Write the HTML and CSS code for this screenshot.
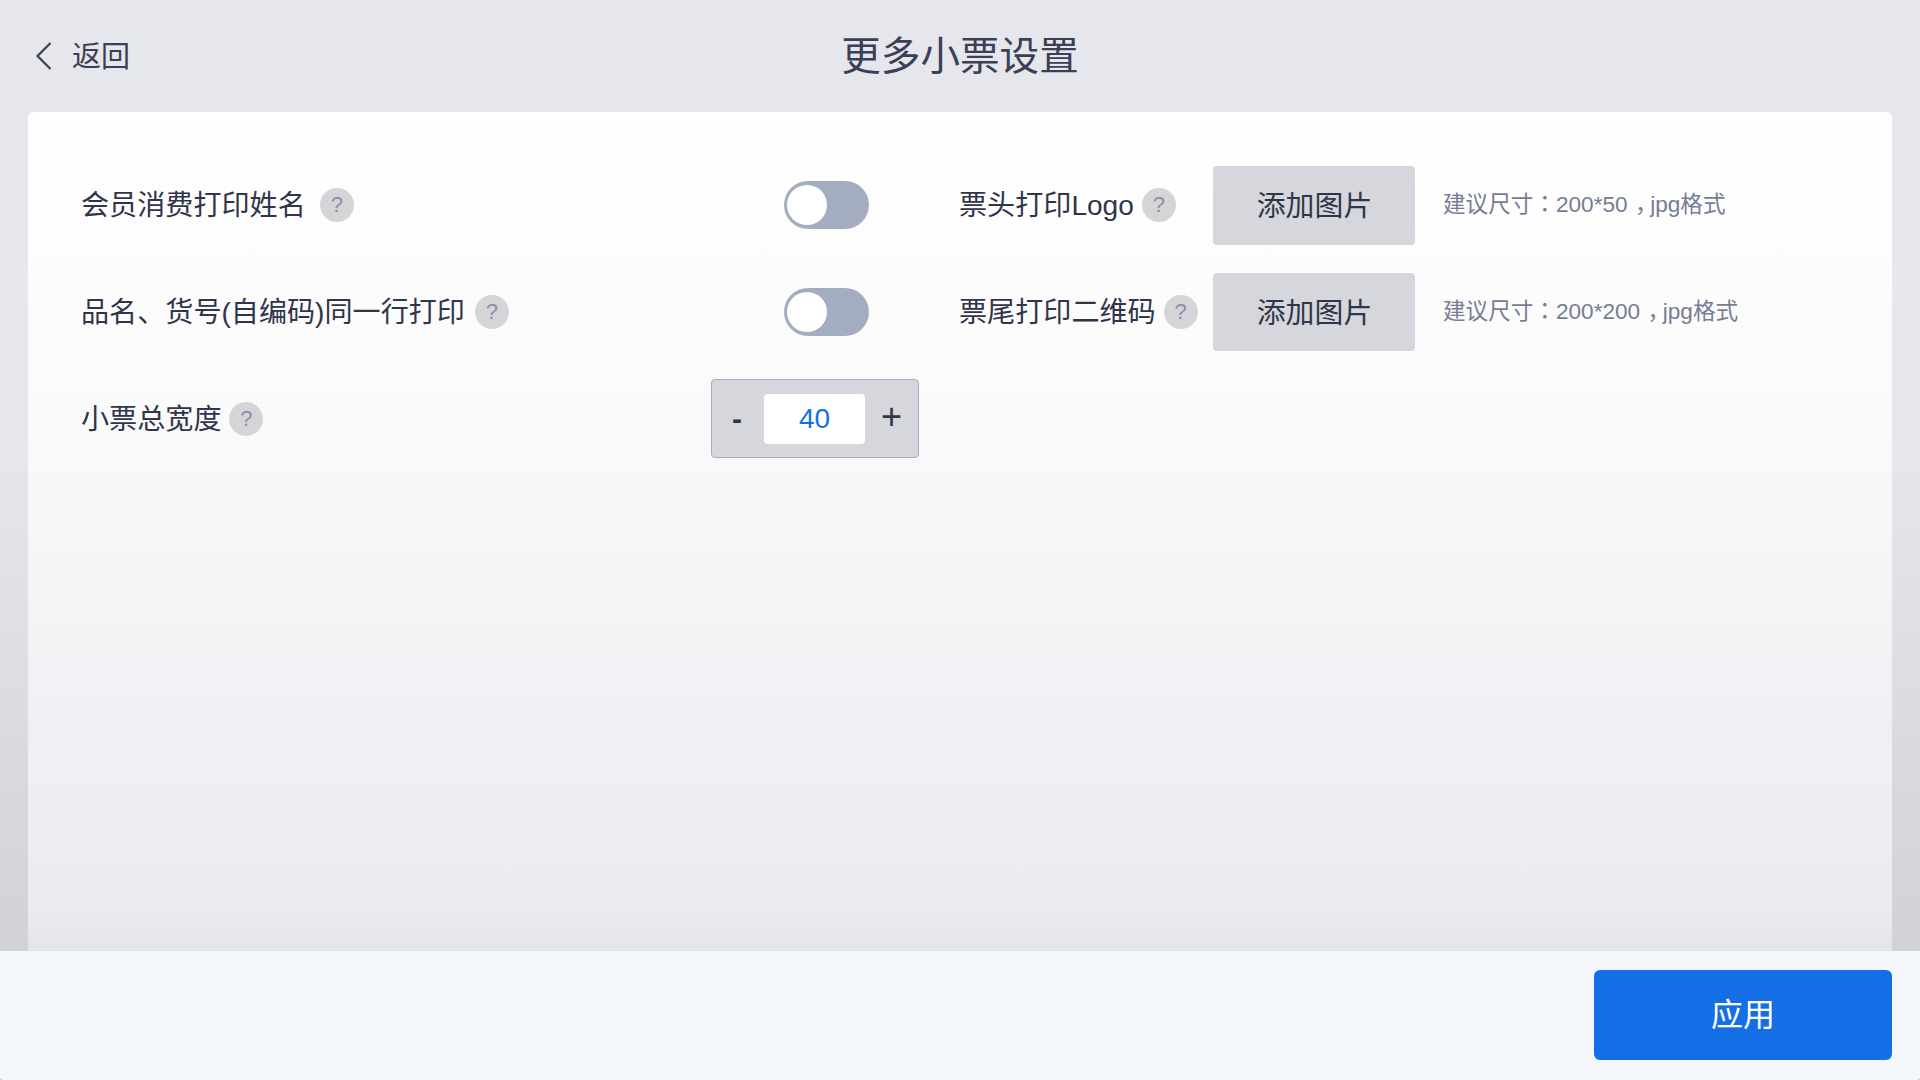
FILE: index.html
```html
<!DOCTYPE html>
<html lang="zh-CN">
<head>
<meta charset="utf-8">
<title>更多小票设置</title>
<link rel="stylesheet" href="styles.css">
</head>
<body>
<div class="app">
  <header class="header">
    <div class="back">
      <svg class="back-icon" width="16" height="28" viewBox="0 0 16 28"><polyline points="14.5,1 1.5,14 14.5,27" fill="none" stroke="#3b4054" stroke-width="2.2"/></svg>
      <span class="back-text">返回</span>
    </div>
    <h1 class="title">更多小票设置</h1>
    <div></div>
  </header>
  <main class="card">
    <div class="grid">
      <div class="row">
        <div class="label-group"><span class="label">会员消费打印姓名</span><span class="help help-a">?</span></div>
        <div class="toggle"><span class="knob"></span></div>
      </div>
      <div class="row-right">
        <div class="label-group label-right"><span class="label">票头打印Logo</span><span class="help help-d">?</span></div>
        <button class="add-btn">添加图片</button>
        <span class="hint">建议尺寸<span class="punct" lang="zh-TW">：</span>200*50<span class="comma">，</span>jpg格式</span>
      </div>
      <div class="row">
        <div class="label-group"><span class="label">品名、货号(自编码)同一行打印</span><span class="help help-b">?</span></div>
        <div class="toggle"><span class="knob"></span></div>
      </div>
      <div class="row-right">
        <div class="label-group label-right"><span class="label">票尾打印二维码</span><span class="help help-d">?</span></div>
        <button class="add-btn">添加图片</button>
        <span class="hint">建议尺寸<span class="punct" lang="zh-TW">：</span>200*200<span class="comma">，</span>jpg格式</span>
      </div>
      <div class="row">
        <div class="label-group"><span class="label">小票总宽度</span><span class="help help-c">?</span></div>
        <div class="stepper">
          <span class="step step-minus">-</span>
          <span class="step-value">40</span>
          <span class="step step-plus">+</span>
        </div>
      </div>
    </div>
  </main>
  <footer class="footer">
    <button class="apply">应用</button>
  </footer>
</div>
</body>
</html>
```
FILE: styles.css
```css
* { box-sizing: border-box; }
html, body { margin: 0; height: 100%; }
body {
  font-family: "Liberation Sans", "Noto Sans CJK SC", sans-serif;
  color: #30354a;
  background: #e6e7ec;
}
.app {
  height: 1080px;
  display: flex;
  flex-direction: column;
  background: linear-gradient(to bottom, #e6e7ec 0, #e6e7ec 450px, #d1d2d6 951px);
}
.header {
  height: 112px;
  flex: none;
  display: grid;
  grid-template-columns: 1fr auto 1fr;
  align-items: center;
  padding: 0 36px;
}
.back {
  display: flex;
  align-items: center;
  gap: 20px;
  font-size: 29px;
  color: #3b4054;
}
.back-text { padding-bottom: 5px; }
.title {
  margin: 0;
  padding-bottom: 7px;
  font-size: 39.6px;
  font-weight: 400;
  color: #3b4054;
}
.card {
  flex: 1;
  margin: 0 28px;
  padding: 54px 53px 0;
  border-radius: 6px 6px 0 0;
  background: linear-gradient(to bottom, #fff 0, #fafafb 300px, #f0f1f4 600px, #ebecef 790px, #e4e5e9 839px);
}
.grid {
  display: grid;
  grid-template-columns: 838px auto;
  column-gap: 40px;
  row-gap: 28px;
  grid-auto-rows: 78.67px;
}
.row, .row-right { display: flex; align-items: center; }
.row { justify-content: space-between; }
.label-group { display: flex; align-items: center; }
.label { padding-top: 2px; font-size: 28.1px; line-height: 1; white-space: nowrap; }
.label-right { width: 254px; }
.help {
  width: 34px;
  height: 34px;
  flex: none;
  border-radius: 50%;
  background: #d5d5d8;
  color: #8a90a8;
  font-size: 22px;
  display: flex;
  align-items: center;
  justify-content: center;
}
.help-a { margin-left: 14px; }
.help-b { margin-left: 10px; }
.help-c { margin-left: 8px; }
.help-d { margin-left: 8px; }
.toggle {
  width: 85px;
  height: 48px;
  margin-right: 50px;
  padding: 4px 3px;
  border-radius: 24px;
  background: #a4adbf;
}
.knob {
  display: block;
  width: 40px;
  height: 40px;
  border-radius: 50%;
  background: #fff;
}
.add-btn {
  width: 202px;
  height: 100%;
  flex: none;
  border: 0;
  border-radius: 4px;
  background: #d6d7dc;
  color: #30354a;
  font: inherit;
  font-size: 28.9px;
  padding: 0 0 4px 1px;
}
.hint {
  margin-left: 28px;
  padding-bottom: 5px;
  font-size: 22.6px;
  color: #767c94;
  white-space: nowrap;
}
.punct { font-family: "Noto Sans CJK TC", sans-serif; }
.comma { padding-left: 0.33em; letter-spacing: -0.33em; }
.stepper {
  width: 208px;
  height: 100%;
  display: flex;
  align-items: center;
  padding: 0 0 0 20px;
  background: #d6d7dc;
  border: 1px solid #a4adbf;
  border-radius: 4px;
}
.step { line-height: 1; }
.step-minus { width: 32px; font-size: 30px; font-weight: 700; }
.step-plus { margin-left: 16px; padding-bottom: 4px; font-size: 36px; }
.step-value {
  width: 101px;
  height: 50px;
  line-height: 50px;
  text-align: center;
  background: #fff;
  border-radius: 4px;
  color: #146fe6;
  font-size: 28px;
}
.footer {
  height: 129px;
  flex: none;
  display: flex;
  justify-content: flex-end;
  align-items: flex-start;
  padding: 19px 28px 0 0;
  background: #f3f6fb;
  border-radius: 0 0 4px 4px;
}
.apply {
  width: 298px;
  height: 90px;
  border: 0;
  border-radius: 6px;
  background: #146fe6;
  color: #fff;
  font: inherit;
  font-size: 32px;
  padding: 0 0 7px;
}
```
